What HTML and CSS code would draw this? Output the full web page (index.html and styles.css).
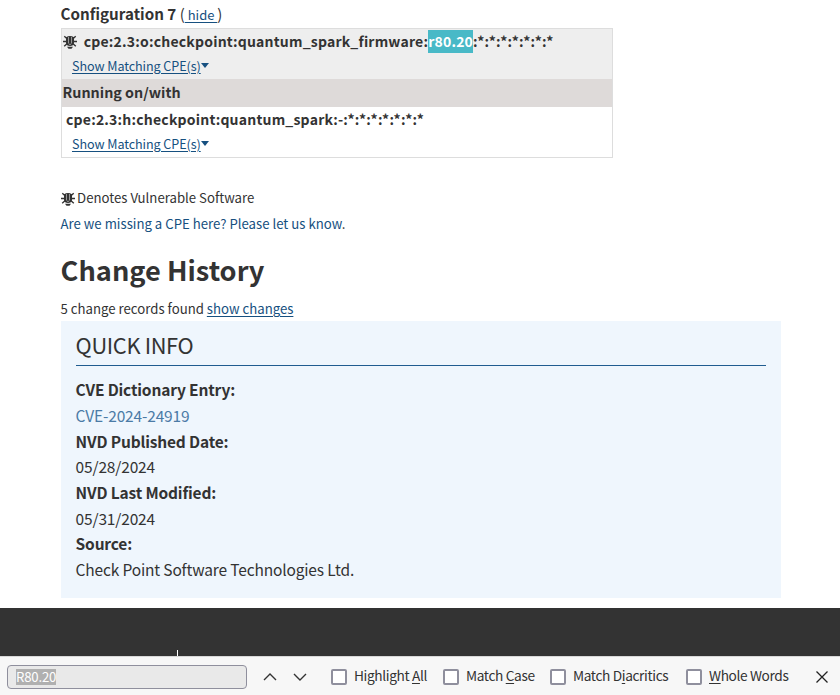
FILE: index.html
```html
<!DOCTYPE html>
<html lang="en">
<head>
<meta charset="utf-8">
<title>NVD - CVE-2024-24919</title>
<link rel="stylesheet" href="styles.css">
</head>
<body>
<svg class="defs" width="0" height="0" aria-hidden="true">
  <symbol id="bug" viewBox="0 0 14 14">
    <path d="M3 2.200Q7-.2 11 2.200V8c0 2-1.700 3-4 3s-4-1-4-3z" fill="#333"/>
    <path d="M1.300 1.300l2.500 2.200M12.700 1.300l-2.500 2.200M0 6.500h14M1.200 11.300l2.800-2.500M12.800 11.300l-2.800-2.500" stroke="#333" stroke-width="1.400" fill="none"/>
    <path d="M4 11.800h6L8.500 13.700h-3z" fill="#333"/>
    <path d="M5.500 2v6.500M8.500 2v6.500M6 9.300h2" stroke="#ddd" stroke-width=".6"/>
  </symbol>
</svg>
<main class="page">
  <div class="config-title"><b>Configuration 7</b> <span class="paren">(</span><a class="hide" href="#">&nbsp;hide&nbsp;</a><span class="paren">)</span></div>
  <section class="config">
    <div class="vulnerable">
      <div class="cpe"><svg class="bug"><use href="#bug"/></svg><b>cpe:2.3:o:checkpoint:quantum_spark_firmware:<mark>r80.20</mark>:*:*:*:*:*:*:*</b></div>
      <div class="matching"><a href="#">Show Matching CPE(s)</a><i class="caret"></i></div>
    </div>
    <div class="running">Running on/with</div>
    <div class="hardware">
      <div class="cpe plain"><b>cpe:2.3:h:checkpoint:quantum_spark:-:*:*:*:*:*:*:*</b></div>
      <div class="matching"><a href="#">Show Matching CPE(s)</a><i class="caret"></i></div>
    </div>
  </section>
  <p class="note denotes"><svg class="bug"><use href="#bug"/></svg>Denotes Vulnerable Software</p>
  <p class="note"><a class="quiet" href="#">Are we missing a CPE here? Please let us know</a>.</p>
  <h2>Change History</h2>
  <p class="note records">5 change records found <a href="#">show changes</a></p>
  <section class="info">
    <h3>QUICK INFO</h3>
    <dl>
      <dt>CVE Dictionary Entry:</dt><dd><a class="cve" href="#">CVE-2024-24919</a></dd>
      <dt>NVD Published Date:</dt><dd>05/28/2024</dd>
      <dt>NVD Last Modified:</dt><dd>05/31/2024</dd>
      <dt>Source:</dt><dd>Check Point Software Technologies Ltd.</dd>
    </dl>
  </section>
</main>
<footer><i class="divider"></i></footer>
<div class="findbar">
  <div class="field"><span>R80.20</span></div>
  <svg class="chev" viewBox="0 0 14 8"><path d="M1 7l6-6 6 6"/></svg>
  <svg class="chev" viewBox="0 0 14 8"><path d="M1 1l6 6 6-6"/></svg>
  <label class="c1"><i></i><span>Highlight <u>A</u>ll</span></label>
  <label class="c2"><i></i><span>Match <u>C</u>ase</span></label>
  <label class="c3"><i></i><span>Match D<u>i</u>acritics</span></label>
  <label class="c4"><i></i><span><u>W</u>hole Words</span></label>
  <svg class="close" viewBox="0 0 12 12"><path d="M.5.5l11 11M11.500.5l-11 11"/></svg>
</div>
</body>
</html>
```
FILE: styles.css
```css
* { box-sizing: border-box; }
body {
  margin: 0;
  height: 695px;
  overflow: hidden;
  display: flex;
  flex-direction: column;
  background: #fff;
  color: #333;
  font-family: "Noto Sans CJK SC", "Noto Sans", sans-serif;
  white-space: nowrap;
}
.defs { position: absolute; }
a { color: #165080; text-underline-offset: 2px; text-decoration-thickness: 1px; }
p, h2, h3, dl, dd { margin: 0; }
.page { width: 720px; margin-left: 60.600px; height: 608px; flex: none; }

.config-title { height: 28px; line-height: 27px; font-size: 15.200px; }
.paren { font-size: 15px; }
.hide { font-size: 13px; }

.config { width: 552px; height: 130px; border: 1px solid #ddd; }
.vulnerable { height: 50px; background: #eee; }
.hardware { height: 50px; }
.cpe { height: 24px; line-height: 24px; display: flex; align-items: center; padding-left: 1.500px; font-size: 14px; letter-spacing: .2px; }
.cpe .bug { margin: 2px 6.600px 0 0; }
.cpe.plain { padding-left: 4.400px; letter-spacing: .207px; }
.bug { width: 14px; height: 14px; flex: none; }
mark { background: #48b9c7; color: #fff; padding: 1px 0 2px; }
.matching { height: 26px; line-height: 24px; padding: 0 0 1px 10.400px; font-size: 12.600px; display: flex; align-items: center; }
.matching a { letter-spacing: -.08px; }
.caret { border: 4.500px solid transparent; border-top: 5px solid #165080; border-bottom: 0; }
.running { height: 28px; line-height: 26px; padding-left: 1px; background: #dedad9; font-size: 14.300px; font-weight: 700; }

.note { height: 26px; line-height: 26px; font-size: 13.200px; }
.denotes { display: flex; align-items: center; gap: 2.500px; margin-top: 27px; }
.denotes .bug { margin-top: 2px; }
.quiet { text-decoration: none; }
h2 { height: 40px; line-height: 40px; margin-top: 12px; font-size: 27.200px; }
.records { margin-top: 6px; line-height: 28px; }

.info { height: 277px; padding: 6px 15px 0; background: #eff6fd; }
h3 { height: 39px; line-height: 36px; border-bottom: 1px solid #205c90; font-size: 21.800px; font-weight: 400; letter-spacing: -.35px; }
dl { padding-top: 11.250px; font-size: 15.500px; line-height: 25.700px; letter-spacing: -.16px; }
dt { font-weight: 700; }
.cve { color: #4b7ba6; text-decoration: none; }

footer { height: 48px; flex: none; background: #333; display: flex; align-items: flex-end; }
.divider { width: 1px; height: 6px; margin-left: 177px; background: #fff; }

.findbar { height: 39px; flex: none; border-top: 1px solid #d8d8d8; background: #f7f7f7; display: flex; align-items: center; padding: 1px 12px 0 7px; font-size: 13.700px; }
.field { width: 240px; height: 24px; border: 1px solid #8f8f9d; border-radius: 4px; background: #e9e9e9; padding: 3px 8px; line-height: 15px; color: #fff; font-size: 13.200px; letter-spacing: -.2px; }
.field span { display: inline-block; height: 16px; background: #b0b0b0; }
.chev { width: 14px; height: 8px; margin-left: 16px; fill: none; stroke: #333; stroke-width: 1.400; }
label { display: flex; align-items: center; gap: 7px; letter-spacing: -.37px; line-height: 20px; }
label i { width: 16px; height: 16px; border: 2px solid #8f8f9d; border-radius: 2px; background: #fff; }
label span { padding-bottom: 3px; }
u { text-underline-offset: 2px; text-decoration-thickness: 1px; }
.c1 { width: 112px; margin-left: 24px; }
.c2 { width: 107px; }
.c3 { width: 136px; }
.close { width: 12px; height: 12px; margin-left: auto; fill: none; stroke: #222; stroke-width: 1.300; }
```
